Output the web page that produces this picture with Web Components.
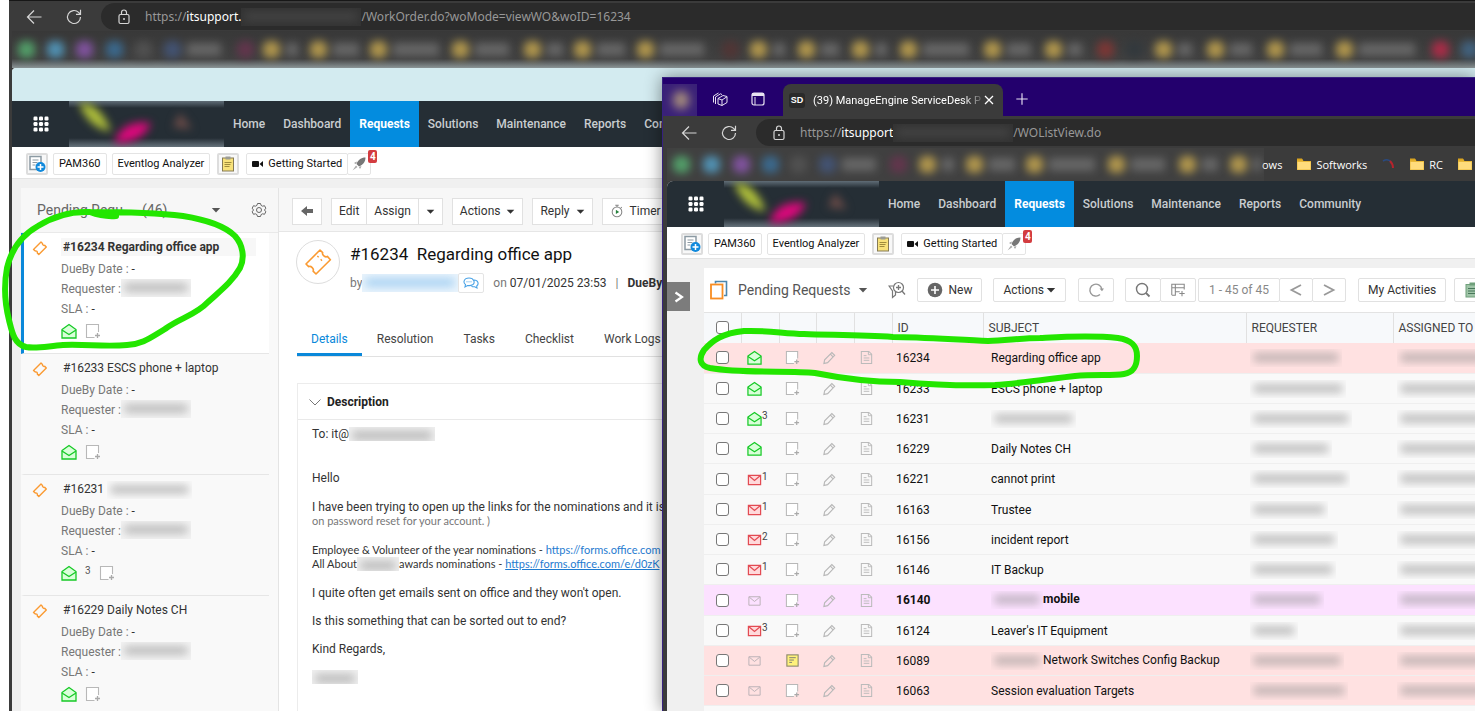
<!DOCTYPE html>
<html lang="en">
<head>
<meta charset="utf-8">
<title>ManageEngine ServiceDesk Plus</title>
<style>
  html, body { height: 100%; }
  body {
    margin: 0;
    overflow: hidden;
    background: #fff;
    font-family: Roboto, "Liberation Sans", sans-serif;
    font-size: 12px;
    color: #333;
  }
</style>
</head>
<body>
<desk-top>
  <browser-window slot="back" class="back">
    <browser-toolbar slot="toolbar" path="/WorkOrder.do?woMode=viewWO&amp;woID=16234" host="itsupport."></browser-toolbar>
    <bookmark-bar slot="bookmarks" set="back"></bookmark-bar>
    <notice-strip></notice-strip>
    <app-nav></app-nav>
    <quick-links></quick-links>
    <work-order></work-order>
  </browser-window>
  <browser-window slot="front" class="front">
    <browser-tabs slot="tabs"></browser-tabs>
    <browser-toolbar slot="toolbar" class="roomy" path="/WOListView.do" host="itsupport"></browser-toolbar>
    <bookmark-bar slot="bookmarks" set="front"></bookmark-bar>
    <app-nav></app-nav>
    <quick-links></quick-links>
    <request-list></request-list>
  </browser-window>
</desk-top>

<script>
const ICONS = {
  back: [16, '<path d="M15.500 8H1.500M8 1.500L1.500 8L8 14.500" fill="none" stroke="currentColor" stroke-width="1.200"/>'],
  reload: [16, '<path d="M14.500 8A6.500 6.500 0 1 1 12.600 3.400L14.500 5.300M14.500 .800V5.300H10" fill="none" stroke="currentColor" stroke-width="1.200"/>'],
  lock: [16, '<rect x="3" y="5.500" width="10" height="9" rx="1.500" fill="none" stroke="currentColor" stroke-width="1.200"/><path d="M5.500 5.500V3.500a2.500 2.500 0 0 1 5 0v2" fill="none" stroke="currentColor" stroke-width="1.200"/><circle cx="8" cy="10" r="1" fill="currentColor"/>'],
  close: [16, '<path d="M4 4l8 8M12 4l-8 8" stroke="currentColor" stroke-width="1.300"/>'],
  plus: [16, '<path d="M8 1.500v13M1.500 8h13" stroke="currentColor" stroke-width="1.300"/>'],
  workspaces: [16, '<path d="M1.500 11.500V5l5-3M3.500 13V6l5-3.200 1.500 .800M6 7.500L11 4.500l4 1v6l-5 3-4-1.500zM6 7.500l4 1.500v5.500M10 9l5-3.300" fill="none" stroke="currentColor" stroke-width="1" stroke-linejoin="round"/>'],
  tabs: [16, '<rect x="2" y="2" width="12" height="12" rx="2" fill="none" stroke="currentColor" stroke-width="1.200"/><path d="M2 3.500h12" stroke="currentColor" stroke-width="3"/><path d="M5 6v8" stroke="currentColor"/>'],
  folder: [16, '<path d="M1 3h5l1.500 2H15v9H1z" fill="#e9b93a"/><path d="M1.500 6h13v7.500h-13z" fill="#ffdc7c"/><path d="M1 2.500h5l1 2H1z" fill="#dba520"/>'],
  arc: [16, '<path d="M2 5q5-3 8 1" fill="none" stroke="#2a4a80" stroke-width="1.500"/><path d="M9 5q3 3 3 7" fill="none" stroke="#b7232c" stroke-width="2"/>'],
  grid: [16, [2.5, 8, 13.5].map(y => [2.5, 8, 13.5].map(x => `<rect x="${x - 2}" y="${y - 2}" width="4" height="4" rx="1.200" fill="currentColor"/>`).join('')).join('')],
  addnote: [18, '<path d="M2 1.500h11v13H2z" fill="#fff" stroke="#8c9aa3" stroke-width="1.500"/><path d="M4.500 5h6M4.500 7.500h5M4.500 10h3" stroke="#8c9aa3"/><circle cx="12.500" cy="12" r="5" fill="#1089dc"/><path d="M12.500 9v6M9.500 12h6" stroke="#fff" stroke-width="1.500"/>'],
  clipboard: [16, '<rect x="2.500" y="2" width="11" height="13" fill="#f8e27a" stroke="#857a55"/><rect x="5.500" y=".500" width="5" height="3" fill="#9c9c94"/><path d="M4.500 6.500h7M4.500 8.500h6M4.500 10.500h5" stroke="#a08c3c"/>'],
  video: [12, '<rect x="0" y="3" width="7" height="6" rx="1" fill="#111"/><path d="M7.500 6L11 3v6z" fill="#111"/>'],
  rocket: [16, '<path d="M14.500 1.500C10 1.500 7 4 5.500 8l2.500 2.500c4-1.500 6.500-5 6.500-9z" fill="#777"/><path d="M6 5.500L3 7l2 1zM10.500 10L9 13l-1-2z" fill="#999"/><path d="M5 9.500L1.500 14.500L6.500 11z" fill="#aaa"/>'],
  gear: [16, '<path d="M6.500 1.500h3l.600 1.900 1.500.800 1.900-.500 1.300 2.500L13.500 8l1.300 1.800-1.300 2.500-1.900-.500-1.500.800-.600 1.900h-3l-.600-1.900-1.500-.800-1.900.500-1.300-2.500L2.500 8 1.200 6.200l1.300-2.500 1.900.500 1.500-.800z" fill="none" stroke="currentColor" stroke-linejoin="round"/><circle cx="8" cy="8" r="2.500" fill="none" stroke="currentColor"/>'],
  ticket: [24, '<path d="M3 13.500L13.500 3l2 2c-.700 1.500 2 3.900 3.500 2.800l2.300 2.500L10.500 21l-2.200-2.200c1-1.700-1.600-4.200-3.300-3.300z" fill="none" stroke="#fa9a32" stroke-width="1.200" stroke-linejoin="round"/><path d="M11.500 7.500l1 1M14 10l1 1" stroke="#fa9a32" stroke-width="1"/>'],
  smallticket: [16, '<path d="M1.500 9.500L9 2l1.500 1.500c-.300 1 1.200 2.300 2.200 1.800L14.300 7 6.800 14.500 5.300 13c.500-1.200-.900-2.500-2-2z" fill="none" stroke="#fa9a32" stroke-width="1.400" stroke-linejoin="round"/>'],
  opened: [16, '<path d="M1 6.500L8 1.500l7 5V15H1z" fill="#d9ffd9" stroke="#16c926" stroke-width="1.300"/><path d="M1 7l7 4.500L15 7" fill="none" stroke="#16c926" stroke-width="1.300"/>'],
  red: [16, '<path d="M1.500 3.500h13v10h-13z" fill="#ffd9db" stroke="#e34b53" stroke-width="1.300"/><path d="M2 4l6 5 6-5" fill="none" stroke="#e34b53" stroke-width="1.300"/>'],
  grey: [16, '<path d="M2 4h12v9H2z" fill="none" stroke="#b9b0b5"/><path d="M2.500 4.500L8 9l5.500-4.500" fill="none" stroke="#b9b0b5"/>'],
  note: [16, '<path d="M9.500 14.500h-8v-13h12V9" fill="#fff" stroke="#b8b8b8" stroke-width="1.100"/><path d="M12.500 10v5M10 12.500h5" stroke="#aaa" stroke-width="1.300"/>'],
  yellownote: [16, '<rect x="2" y="2" width="12" height="12" fill="#fff27a" stroke="#8e8a6e" stroke-width="1.200"/><path d="M4.500 5h7M4.500 7.500h5M4.500 10h3" stroke="#777"/>'],
  pencil: [16, '<path d="M2 14.500l.800-4L10.500 2.700l3 3L6 13.500zM9 4.500l3 3" fill="none" stroke="#b8b8b8" stroke-width="1.200"/>'],
  doc: [16, '<path d="M2.500 1.500h8l3 3v10h-11z" fill="none" stroke="#bbb" stroke-width="1.100"/><path d="M10 1.500V5h3.500M5 6h3M5 8.500h6M5 11h6" fill="none" stroke="#bbb"/>'],
  arrow: [14, '<path d="M1 7l6-5v3h6v4H7v3z" fill="#666"/>'],
  timer: [16, '<circle cx="8" cy="9" r="5.500" fill="none" stroke="#888" stroke-width="1.200"/><path d="M6 1.500h4M8 1.500v2M12.500 3.500l1 1" stroke="#888" stroke-width="1.200"/><path d="M6.700 6.500L10.500 9l-3.800 2.500z" fill="#27823d"/>'],
  chat: [16, '<path d="M10 9.500c2-1.500 1.500-6.500-4-6.500-5.500 0-6 5-3.500 6.500L2 12l2.500-1.500c2 .400 4 0 5.500-1zM11 5c4.500 0 5 4.500 2.700 6l.300 2-2.300-1.300c-1.300.200-2.300 0-3.200-.500" fill="none" stroke="#4aa3e6" stroke-width="1.100"/><path d="M3.500 6.800h5" stroke="#4aa3e6" stroke-dasharray="1 1"/>'],
  chevron: [12, '<path d="M.500 3.500L6 9l5.500-5.500" fill="none" stroke="#777"/>'],
  caret: [10, '<path d="M.800 3h8.400L5 7.500z" fill="currentColor"/>'],
  pages: [20, '<path d="M6.500 3.500v-2h11v14H15" fill="none" stroke="#4c86ad" stroke-width="1.600"/><rect x="2" y="4.500" width="11.500" height="14" fill="#fff" stroke="#f88d22" stroke-width="1.800"/>'],
  filter: [18, '<circle cx="10.500" cy="6.500" r="5" fill="none" stroke="#777" stroke-width="1.200"/><path d="M14 10l3 3.500M10.500 4v5M8 6.500h5" stroke="#777" stroke-width="1.300"/><path d="M5 5H1l3.500 5v6.500L7.500 14v-3" fill="none" stroke="#777" stroke-width="1.200"/>'],
  new: [16, '<circle cx="8" cy="8" r="7.300" fill="#666"/><path d="M8 4v8M4 8h8" stroke="#fff" stroke-width="1.600"/>'],
  refresh: [16, '<path d="M13.800 7A6 6 0 1 0 12 12.500" fill="none" stroke="#999" stroke-width="1.400"/><path d="M11.500 6.500h4.500l-2 2.800z" fill="#999"/>'],
  search: [16, '<circle cx="7" cy="7" r="5.500" fill="none" stroke="#777" stroke-width="1.400"/><path d="M11 11l3.500 3.500" stroke="#777" stroke-width="1.800"/>'],
  columns: [18, '<path d="M2 14.500V2.500h14v4H2M6 2.500V15H2M6 11h5M16 6.500v2" fill="none" stroke="#888" stroke-width="1.200"/><path d="M13.500 10v6M10.500 13h6" stroke="#888" stroke-width="1.200"/>'],
  prev: [14, '<path d="M12 2L2.500 7l9.500 5" fill="none" stroke="#999" stroke-width="1.800"/>'],
  next: [14, '<path d="M2 2l9.500 5L2 12" fill="none" stroke="#999" stroke-width="1.800"/>'],
  expand: [12, '<path d="M2.500 1.500L9 6l-6.500 4.500" fill="none" stroke="#fff" stroke-width="2.200"/>'],
  tasks: [16, '<rect x="2" y="2.500" width="13" height="12.500" fill="#9fc4a7" stroke="#6f9f7b"/><rect x="5.500" y=".500" width="6" height="3" fill="#6f9f7b"/><path d="M4 6.500h9M4 9h9M4 11.500h9" stroke="#47775a"/>']
};

const icon = (name, size) => `<svg class="icon" width="${size || ICONS[name][0]}" height="${size || ICONS[name][0]}" viewBox="0 0 ${ICONS[name][0]} ${ICONS[name][0]}" aria-hidden="true">${ICONS[name][1]}</svg>`;

const BASE = `
  * { box-sizing: border-box; }
  :host { display: block; }
  svg { display: block; flex: none; }
  a { color: inherit; text-decoration: none; }
  button { font: inherit; color: inherit; margin: 0; padding: 0; border: 0; background: none; display: flex; align-items: center; white-space: nowrap; flex: none; }
`;

class BaseElement extends HTMLElement {
  constructor() {
    super();
    this.attachShadow({ mode: "open" });
  }

  connectedCallback() {
    this.shadowRoot.innerHTML = `<style>${BASE}${this.styles()}</style>${this.markup()}`;
  }

  styles() { return ""; }
  markup() { return "<slot></slot>"; }
}

// smudged-out piece of text
class BlurPatch extends BaseElement {
  styles() {
    return `
      :host { display: inline-block; flex: none; width: ${this.getAttribute("width")}px; height: 18px; overflow: hidden; vertical-align: middle; background: var(--patch, transparent); }
      i { display: block; height: 9px; margin: 4px 3px; filter: blur(4px); opacity: .5; border-radius: 4px; background: ${this.getAttribute("color") || "#888"}; }
    `;
  }
  markup() { return "<i></i>"; }
}

class DeskTop extends BaseElement {
  styles() {
    return `
      :host { position: relative; height: 100%; overflow: hidden; }
      slot { display: block; position: absolute; }
      .back { inset: 0 0 0 9px; }
      .front { inset: 77px 0 0 662px; box-shadow: 0 0 16px rgba(0, 0, 0, .45); }
      .ink { position: absolute; left: 0; top: 0; pointer-events: none; }
    `;
  }
  markup() {
    return `
      <slot class="back" name="back"></slot>
      <slot class="front" name="front"></slot>
      <svg class="ink" width="1150" height="400" fill="none" stroke="#23e600" stroke-width="6" stroke-linecap="round" stroke-linejoin="round" aria-hidden="true">
        <path d="M116 216Q103 217 90 212C115 212 150 212 183 216C208 220 226 227 235 236C243 245 245 258 240 268C232 282 220 291 208 302C196 315 180 318 165 329C150 338 143 344 127 345C105 347 85 344 63 345C48 346 36 349 26 347C14 344 12 332 9 320C5 304 4 284 7 268C12 246 24 234 38 226C54 216 70 211 90 212Q106 217 116 214"/>
        <path d="M804 334C785 334 768 330 744 331C722 333 712 341 704 350C698 359 700 366 710 368C745 374 790 370 815 373C845 379 870 382 900 382C935 385 965 386 995 385C1025 383 1055 378 1075 376C1095 374 1112 376 1124 374C1135 372 1137 364 1137 356C1137 345 1131 340 1118 338C1090 335 1060 337 1040 338C1020 338 1005 341 988 341C960 340 920 337 893 337C860 335 830 335 804 334"/>
      </svg>
    `;
  }
}

class BrowserWindow extends BaseElement {
  styles() {
    return `
      :host { height: 100%; background: #3b3b3b; overflow: hidden; }
      .frame { height: 100%; display: flex; flex-direction: column; padding-left: 3px; border-top: 1px solid #171717; }
      .page { flex: 1; min-height: 0; display: flex; flex-direction: column; background: #f0f0f0; overflow: hidden; border-radius: 4px 0 0 0; }
      :host(.front) .frame { padding-left: 4px; border-left: 1px solid #36217f; border-top-color: #36217f; }
      :host(.front) .page { border-radius: 6px 0 0 0; }
    `;
  }
  markup() {
    return `
      <div class="frame">
        <slot name="tabs"></slot>
        <slot name="toolbar"></slot>
        <slot name="bookmarks"></slot>
        <div class="page"><slot></slot></div>
      </div>
    `;
  }
}

class BrowserTabs extends BaseElement {
  styles() {
    return `
      :host { height: 38px; margin-left: -4px; background: #23006d; color: #e8e2f2; }
      .row { height: 38px; display: flex; align-items: flex-end; }
      .profile { width: 34px; height: 32px; margin-right: 4px; overflow: hidden; background: #3a2178; }
      .profile i { display: block; width: 16px; height: 18px; margin: 7px 10px; border-radius: 8px; background: #a58c7c; filter: blur(5px); }
      .row > button { height: 34px; justify-content: center; width: 38px; }
      .tab { height: 32px; width: 220px; margin-left: 6px; padding: 0 6px; display: flex; align-items: center; background: #3b3b3b; color: #fff; border-radius: 8px 8px 0 0; font-size: 11px; }
      .site { width: 16px; height: 15px; margin-right: 8px; border-radius: 3px; background: #2a2a2a; font: bold 9px/15px "Liberation Sans", sans-serif; text-align: center; }
      .title { flex: 1; white-space: nowrap; -webkit-mask-image: linear-gradient(90deg, #000 150px, #0003 168px); }
    `;
  }
  markup() {
    return `
      <div class="row">
        <div class="profile"><i></i></div>
        <button aria-label="Workspaces">${icon("workspaces")}</button>
        <button aria-label="Tab actions">${icon("tabs")}</button>
        <div class="tab">
          <span class="site">SD</span>
          <span class="title">(39) ManageEngine ServiceDesk P</span>
          <button aria-label="Close tab">${icon("close")}</button>
        </div>
        <button aria-label="New tab">${icon("plus", 14)}</button>
      </div>
    `;
  }
}

class BrowserToolbar extends BaseElement {
  styles() {
    return `
      :host { color: #d6d6d6; font: 12px "Noto Sans", "Open Sans", sans-serif; }
      .bar { display: flex; align-items: center; padding: 2px 0 1px 14px; }
      :host(.roomy) .bar { padding-top: 3px; }
      button { width: 16px; height: 16px; margin-right: 24px; }
      button + button { margin-right: 19px; }
      .address { flex: 1; height: 27px; display: flex; align-items: center; padding-left: 15px; background: #2b2b2b; border-radius: 14px 0 0 14px; white-space: nowrap; overflow: hidden; }
      .address svg { margin-right: 13px; }
      .grey { color: #989898; }
      b { color: #fff; font-weight: 400; }
      blur-patch { --patch: #333; }
    `;
  }
  markup() {
    return `
      <div class="bar">
        <button aria-label="Back">${icon("back")}</button>
        <button aria-label="Refresh">${icon("reload")}</button>
        <div class="address">${icon("lock")}<span class="grey">https://</span><b>${this.getAttribute("host")}</b><blur-patch width="120" color="#555"></blur-patch><span class="grey">${this.getAttribute("path").replace("&", "&amp;")}</span></div>
      </div>
    `;
  }
}

// [colour, distance to the next bookmark, label width]
const MARKS = {
  back: [
    ["#57b573", 29, 0], ["#55a5cf", 29, 0], ["#9057b5", 30, 0], ["#3a73a0", 29, 0], ["#555", 29, 0], ["#44587f", 73, 34],
    ["#6b3350", 26, 0], ["#cbab50", 47, 12], ["#cbab50", 60, 26], ["#cbab50", 82, 46], ["#cbab50", 72, 34], ["#cbab50", 50, 16],
    ["#cbab50", 63, 28], ["#cbab50", 85, 44], ["#533", 28, 0], ["#cbab50", 48, 12], ["#cbab50", 54, 18], ["#cbab50", 48, 12],
    ["#cbab50", 84, 46], ["#cbab50", 61, 24], ["#cbab50", 52, 14], ["#8a3533", 29, 0], ["#30383d", 29, 0], ["#cbab50", 52, 14],
    ["#cbab50", 60, 22], ["#cbab50", 69, 32], ["#cbab50", 96, 56], ["#c3284a", 29, 0], ["#426b8f", 29, 0]
  ],
  front: [
    ["#57b573", 30, 0], ["#55a5cf", 30, 0], ["#9057b5", 29, 0], ["#3a73a0", 28, 0], ["#555", 29, 0], ["#44587f", 71, 34],
    ["#6b3350", 29, 0], ["#cbab50", 47, 12], ["#cbab50", 60, 26], ["#cbab50", 82, 46], ["#cbab50", 71, 34], ["#cbab50", 51, 16],
    ["#cbab50", 34, 8]
  ]
};

class BookmarkBar extends BaseElement {
  styles() {
    return `
      :host { overflow: hidden; color: #fff; font: 11px "Open Sans", sans-serif; }
      .bar { display: flex; align-items: center; height: 37px; background: linear-gradient(#383838, #404040 75%, #8b9597); overflow: hidden; }
      .front { height: 34px; background: #3b3b3b; }
      .smudges { display: flex; flex: none; height: 33px; align-items: center; padding-left: 6px; overflow: hidden; }
      .front .smudges { background: #404040; }
      .mark { flex: none; display: flex; align-items: center; gap: 6px; filter: blur(4px); opacity: .8; }
      .mark i { width: 17px; height: 17px; border-radius: 6px; }
      .mark u { height: 13px; background: #707070; }
      .named { display: flex; flex: none; align-items: center; margin-left: -2px; }
      .named svg { margin: 0 4px 0 14px; }
      .named .plain svg { margin-right: 0; }
      .named .plain + a svg { margin-left: 12px; }
      a { display: flex; align-items: center; }
    `;
  }
  markup() {
    const set = this.getAttribute("set");
    const marks = MARKS[set].map(([color, step, label]) =>
      `<span class="mark" style="width:${step}px"><i style="background:${color}"></i><u style="width:${label}px"></u></span>`).join("");
    const named = set === "front"
      ? `<div class="named">ows<a href="#">${icon("folder")}Softworks</a><a href="#" class="plain" aria-label="Bookmark">${icon("arc")}</a><a href="#">${icon("folder")}RC</a><a href="#" aria-label="Folder">${icon("folder")}</a></div>`
      : "";
    return `<div class="bar ${set}"><div class="smudges">${marks}</div>${named}</div>`;
  }
}

class NoticeStrip extends BaseElement {
  styles() {
    return `:host { flex: none; height: 33px; background: #d3ebf0; }`;
  }
}

class AppNav extends BaseElement {
  styles() {
    return `
      :host { flex: none; }
      nav { display: flex; align-items: stretch; height: 46px; background: #252e35; color: #c9cdd0; font-weight: 500; }
      .apps { width: 57px; justify-content: center; color: #fff; }
      .logo { width: 155px; overflow: hidden; background: linear-gradient(#5f6c76, #252e35 7px, #252e35 37px, #66727b); flex: none; }
      a { display: flex; align-items: center; padding: 0 9px; }
      a.active { background: #038cdf; color: #fff; font-weight: 700; }
    `;
  }
  markup() {
    const links = ["Home", "Dashboard", "Requests", "Solutions", "Maintenance", "Reports", "Community"]
      .map(name => `<a href="#" class="${name === "Requests" ? "active" : ""}">${name}</a>`).join("");
    return `
      <nav>
        <button class="apps" aria-label="Apps">${icon("grid")}</button>
        <svg class="logo" width="155" height="46" role="img" aria-label="Logo">
          <g style="filter: blur(4px)">
            <path d="M10 2Q30 0 42 30Q20 28 10 2z" fill="#b0c03a"/>
            <path d="M46 40Q54 18 82 22Q74 42 46 42z" fill="#dc087c"/>
            <path d="M104 26l7-14 12 16z" fill="#6c4c48"/>
          </g>
        </svg>
        ${links}
      </nav>
    `;
  }
}

class QuickLinks extends BaseElement {
  styles() {
    return `
      :host { flex: none; font-size: 11px; color: #111; }
      .bar { display: flex; align-items: center; height: 32px; padding: 2px 0 0 14px; gap: 5px; background: #fff; border-bottom: 1px solid #e3e3e3; }
      button { height: 22px; padding: 0 5px; border: 1px solid #e4e4e4; border-radius: 2px; background: #fff; }
      .square { width: 22px; padding: 0; justify-content: center; border: 2px solid #ddd; background: #f8f8f8; }
      .clip { margin-left: 2px; }
      .group { display: flex; position: relative; margin-left: 2px; }
      .group button + button { margin-left: -1px; padding: 0 3px; }
      .group svg { margin-right: 4px; }
      .group button + button svg { margin: 0; }
      .badge { position: absolute; right: -6px; top: -3px; width: 9px; background: #d33c40; color: #fff; font: bold 10px/13px Roboto, sans-serif; text-align: center; border-radius: 2px; }
    `;
  }
  markup() {
    return `
      <div class="bar">
        <button class="square" aria-label="New request">${icon("addnote")}</button>
        <button>PAM360</button>
        <button>Eventlog Analyzer</button>
        <button class="square clip" aria-label="Clipboard">${icon("clipboard")}</button>
        <div class="group">
          <button>${icon("video")}Getting Started</button>
          <button aria-label="Announcements">${icon("rocket")}</button>
          <span class="badge">4</span>
        </div>
      </div>
    `;
  }
}

class RequestCard extends BaseElement {
  styles() {
    return `
      .card { display: grid; grid-template-columns: 37px 1fr; height: 121px; margin-right: 9px; padding-top: 5px; border-left: 3px solid transparent; border-bottom: 1px solid #e6e6e6; color: #777; line-height: 20px; }
      :host([selected]) .card { background: #fff; border-left-color: #0a88da; }
      .ticket { padding: 2px 0 0 8px; }
      h3 { margin: 0 13px 3px 0; padding-left: 2px; font: 12px/18px Roboto, sans-serif; color: #333; height: 18px; white-space: nowrap; }
      :host([selected]) h3 { font-weight: 700; background: #f7f7f7; }
      div { white-space: nowrap; }
      .marks { display: flex; height: 20px; gap: 8px; margin-top: 2px; align-items: center; }
      sup { font-size: 10px; line-height: 16px; color: #555; align-self: flex-start; }
      .row { height: 20px; }
      b { font-weight: 400; color: #333; }
      blur-patch { --patch: #f3f3f3; vertical-align: top; }
    `;
  }
  markup() {
    const count = this.getAttribute("count");
    return `
      <div class="card">
        <div class="ticket">${icon("smallticket")}</div>
        <div>
          <h3><slot></slot></h3>
          <div class="row">DueBy Date : <b>-</b></div>
          <div class="row">Requester :<blur-patch width="70"></blur-patch></div>
          <div class="row">SLA : <b>-</b></div>
          <div class="marks">${icon("opened")}${count ? `<sup>${count}</sup>` : ""}${icon("note")}</div>
        </div>
      </div>
    `;
  }
}

class WorkOrder extends BaseElement {
  styles() {
    return `
      :host { flex: 1; min-height: 0; padding: 9px 0 0 9px; }
      .columns { height: 100%; display: grid; grid-template-columns: 258px 1fr; background: #f9f9f9; }
      aside { border-right: 1px solid #e4e4e4; }
      .filter { display: flex; align-items: center; height: 45px; padding-left: 16px; background: #f7f7f7; font-size: 14px; color: #666; border-bottom: 1px solid #e9e9e9; }
      .filter span { width: 105px; white-space: nowrap; }
      .filter button:nth-of-type(1) { margin: 0 30px 0 44px; color: #555; }
      main { background: #fff; min-width: 0; overflow: hidden; }
      .actions { display: flex; align-items: center; height: 44px; padding: 3px 0 0 13px; gap: 9px; background: #f7f7f7; border-bottom: 1px solid #e6e6e6; }
      .actions button { height: 27px; padding: 0 7px; background: #fff; border: 1px solid #e1e1e1; color: #333; gap: 6px; }
      .group { display: flex; }
      .group button + button { margin-left: -1px; }
      .head { display: flex; gap: 10px; padding: 8px 0 0 17px; }
      .circle { flex: none; width: 44px; height: 44px; display: grid; place-items: center; border: 1px solid #ddd; border-radius: 50%; }
      h1 { margin: 0 0 5px; font: 17px/28px Roboto, sans-serif; color: #111; white-space: pre; }
      .by { display: flex; align-items: center; height: 20px; white-space: nowrap; color: #333; }
      .by span { color: #777; }
      .by button { height: 20px; padding: 0 4px; margin-right: 9px; border: 1px solid #e4e4e4; border-radius: 2px; }
      .by blur-patch { --patch: #eaf4fc; }
      .by .sep { margin: 0 9px; }
      .tabs { display: flex; margin: 32px 0 0 18px; border-bottom: 1px solid #e1e1e1; }
      .tabs a { height: 31px; line-height: 28px; padding: 0 15px; color: #444; white-space: nowrap; }
      .tabs a.on { padding: 0 14px; color: #0a88da; border-bottom: 3px solid #0a88da; }
      section { margin: 26px 0 0 18px; height: 400px; border: 1px solid #ececec; }
      h2 { display: flex; align-items: center; gap: 6px; margin: 0; padding-left: 11px; height: 36px; font: 700 12px Roboto, sans-serif; color: #222; border-bottom: 1px solid #e9e9e9; }
      .mail { display: flex; flex-direction: column; gap: 15px; padding: 7px 14px; line-height: 14px; white-space: nowrap; color: #333; }
      .mail p { margin: 0; }
      .mail .to { margin-bottom: 15px; height: 14px; line-height: 14px; }
      .small { font: 11px/14px Lato, "Open Sans", sans-serif; }
      .soft { color: #777; }
      .mail a { color: #1f7bd0; }
      .mail .line { text-decoration: underline; }
      .closing { display: flex; flex-direction: column; gap: 14px; }
      .mail blur-patch { --patch: #f0f0f0; height: 14px; vertical-align: top; }
    `;
  }
  markup() {
    return `
      <div class="columns">
        <aside>
          <div class="filter"><span>Pending Requ...</span>(46)<button aria-label="Choose view">${icon("caret")}</button><button aria-label="Settings">${icon("gear")}</button></div>
          <request-card selected>#16234 Regarding office app</request-card>
          <request-card>#16233 ESCS phone + laptop</request-card>
          <request-card count="3">#16231 <blur-patch width="85"></blur-patch></request-card>
          <request-card>#16229 Daily Notes CH</request-card>
        </aside>
        <main>
          <div class="actions">
            <button aria-label="Back">${icon("arrow")}</button>
            <div class="group"><button>Edit</button><button>Assign</button><button aria-label="Assign options">${icon("caret", 9)}</button></div>
            <button>Actions ${icon("caret", 9)}</button>
            <button>Reply ${icon("caret", 9)}</button>
            <button>${icon("timer", 14)}Timer</button>
          </div>
          <div class="head">
            <div class="circle">${icon("ticket", 32)}</div>
            <div>
              <h1>#16234  Regarding office app</h1>
              <div class="by"><span>by</span><blur-patch width="96" color="#6db3ea"></blur-patch><button aria-label="Chat">${icon("chat")}</button><span>on&nbsp;</span> 07/01/2025 23:53<span class="sep">|</span><strong>DueBy Date</strong></div>
            </div>
          </div>
          <div class="tabs"><a href="#" class="on">Details</a><a href="#">Resolution</a><a href="#">Tasks</a><a href="#">Checklist</a><a href="#">Work Logs</a></div>
          <section>
            <h2>${icon("chevron")}Description</h2>
            <div class="mail">
              <p class="to">To: it@<blur-patch width="86"></blur-patch></p>
              <p>Hello</p>
              <div><p>I have been trying to open up the links for the nominations and it is</p><p class="small soft">on password reset for your account. )</p></div>
              <div class="small"><p>Employee &amp; Volunteer of the year nominations - <a href="#">https://forms.office.com</a></p><p>All About<blur-patch width="42"></blur-patch>awards nominations - <a href="#" class="line">https://forms.office.com/e/d0zK</a></p></div>
              <div class="closing">
                <p>I quite often get emails sent on office and they won't open.</p>
                <p>Is this something that can be sorted out to end?</p>
                <p>Kind Regards,</p>
                <p><blur-patch width="46"></blur-patch></p>
              </div>
            </div>
          </section>
        </main>
      </div>
    `;
  }
}

const REQUESTS = [
  { id: 16234, subject: "Regarding office app", mail: "opened", tone: "pink", who: 88 },
  { id: 16233, subject: "ESCS phone + laptop", mail: "opened", who: 92 },
  { id: 16231, subject: "", hidden: 85, mail: "opened", count: 3, who: 98 },
  { id: 16229, subject: "Daily Notes CH", mail: "opened", who: 78 },
  { id: 16221, subject: "cannot print", mail: "red", count: 1, who: 96 },
  { id: 16163, subject: "Trustee", mail: "red", count: 1, who: 74 },
  { id: 16156, subject: "incident report", mail: "red", count: 2, who: 84 },
  { id: 16146, subject: "IT Backup", mail: "red", count: 1, who: 82 },
  { id: 16140, subject: "mobile", hidden: 52, mail: "grey", tone: "lilac", who: 70 },
  { id: 16124, subject: "Leaver's IT Equipment", mail: "red", count: 3, who: 44 },
  { id: 16089, subject: "Network Switches Config Backup", hidden: 52, mail: "grey", note: "yellownote", tone: "pink", who: 90 },
  { id: 16063, subject: "Session evaluation Targets", mail: "grey", tone: "pink", who: 94 }
];

class RequestTable extends BaseElement {
  styles() {
    return `
      table { width: 100%; border-collapse: collapse; table-layout: fixed; }
      col.tick, col.note { width: 37px; }
      col.mail, col.edit, col.doc { width: 38px; }
      col.id { width: 91px; }
      col.subject { width: 263px; }
      col.requester { width: 147px; }
      th, td { padding: 0; text-align: left; vertical-align: middle; font-weight: 400; white-space: nowrap; overflow: hidden; }
      th { height: 30px; padding-left: 5px; background: #f7f9fb; color: #444; border-top: 1px solid #e3e3e3; }
      th + th { border-left: 1px solid #e1e1e1; }
      td { height: 30px; background: #f9f9f9; color: #111; border-bottom: 1px solid #efefef; }
      tr:nth-child(4n + 1) td { height: 31px; }
      .pink td { background: #ffe1e1; }
      .lilac td { background: #fce1ff; font-weight: 700; }
      .tick { padding-left: 12px; }
      .mail { padding-left: 6px; }
      .mail div { display: flex; align-items: center; }
      sup { font-size: 10px; line-height: 10px; align-self: flex-start; color: #444; }
      .pic { padding-left: 6px; }
      .doc { padding-left: 5px; }
      .id { padding-left: 4px; }
      .subject { padding-left: 8px; }
      .who { padding-left: 4px; }
      input { appearance: none; display: block; width: 13px; height: 13px; margin: 0; border: 1px solid #777; border-radius: 3px; background: #fff; }
    `;
  }
  markup() {
    const rows = REQUESTS.map(r => `
      <tr class="${r.tone || ""}">
        <td class="tick"><input type="checkbox" aria-label="Select ${r.id}"></td>
        <td class="mail"><div>${icon(r.mail, 15)}${r.count ? `<sup>${r.count}</sup>` : ""}</div></td>
        <td class="pic">${icon(r.note || "note", 15)}</td>
        <td class="pic">${icon("pencil", 15)}</td>
        <td class="doc">${icon("doc", 15)}</td>
        <td class="id">${r.id}</td>
        <td class="subject">${r.hidden ? `<blur-patch width="${r.hidden}"></blur-patch>` : ""}${r.subject}</td>
        <td class="who"><blur-patch width="${r.who + 4}"></blur-patch></td>
        <td class="who"><blur-patch width="90"></blur-patch></td>
      </tr>`).join("");
    return `
      <table>
        <colgroup><col class="tick"><col class="mail"><col class="note"><col class="edit"><col class="doc"><col class="id"><col class="subject"><col class="requester"><col></colgroup>
        <thead><tr><th class="tick"><input type="checkbox" aria-label="Select all"></th><th></th><th></th><th></th><th></th><th>ID</th><th>SUBJECT</th><th>REQUESTER</th><th>ASSIGNED TO</th></tr></thead>
        <tbody>${rows}</tbody>
      </table>
    `;
  }
}

class RequestList extends BaseElement {
  styles() {
    return `
      :host { flex: 1; min-height: 0; }
      .layout { display: grid; grid-template-columns: 37px 1fr; height: 100%; padding-top: 9px; }
      .expand { width: 23px; height: 29px; margin-top: 14px; justify-content: center; background: #7c7c7c; }
      main { min-width: 0; overflow: hidden; background: #f9f9f9; }
      .bar { display: flex; align-items: center; height: 44px; padding-left: 5px; background: #fff; }
      .view { font-size: 14px; color: #555; gap: 8px; margin: 0 20px 0 9px; }
      .box { height: 24px; padding: 0 9px; border: 1px solid #e1e1e1; border-radius: 2px; background: #fff; }
      .group { display: flex; margin-left: 11px; }
      .group .box + .box { margin-left: -1px; }
      .new { gap: 5px; margin-left: 11px; }
      .menu { gap: 2px; margin-left: 11px; }
      .refresh { margin-left: 12px; }
      .count { display: flex; align-items: center; padding: 0 10px; color: #888; white-space: nowrap; }
      .pager { margin-left: 2px; }
      .mine { margin-left: 12px; }
      .tasks { margin-left: 8px; }
    `;
  }
  markup() {
    return `
      <div class="layout">
        <button class="expand" aria-label="Show panel">${icon("expand")}</button>
        <main>
          <div class="bar">
            ${icon("pages")}
            <button class="view">Pending Requests ${icon("caret")}</button>
            <button aria-label="Filter">${icon("filter")}</button>
            <button class="box new">${icon("new")}New</button>
            <button class="box menu">Actions ${icon("caret")}</button>
            <button class="box refresh" aria-label="Refresh">${icon("refresh")}</button>
            <div class="group"><button class="box" aria-label="Search">${icon("search")}</button><button class="box" aria-label="Columns">${icon("columns", 16)}</button></div>
            <div class="group pager"><span class="box count">1 - 45 of 45</span><button class="box" aria-label="Previous">${icon("prev")}</button><button class="box" aria-label="Next">${icon("next")}</button></div>
            <button class="box mine">My Activities</button>
            <button class="box tasks" aria-label="Tasks">${icon("tasks")}</button>
          </div>
          <request-table></request-table>
        </main>
      </div>
    `;
  }
}

customElements.define("blur-patch", BlurPatch);
customElements.define("desk-top", DeskTop);
customElements.define("browser-window", BrowserWindow);
customElements.define("browser-tabs", BrowserTabs);
customElements.define("browser-toolbar", BrowserToolbar);
customElements.define("bookmark-bar", BookmarkBar);
customElements.define("notice-strip", NoticeStrip);
customElements.define("app-nav", AppNav);
customElements.define("quick-links", QuickLinks);
customElements.define("request-card", RequestCard);
customElements.define("work-order", WorkOrder);
customElements.define("request-table", RequestTable);
customElements.define("request-list", RequestList);
</script>
</body>
</html>
